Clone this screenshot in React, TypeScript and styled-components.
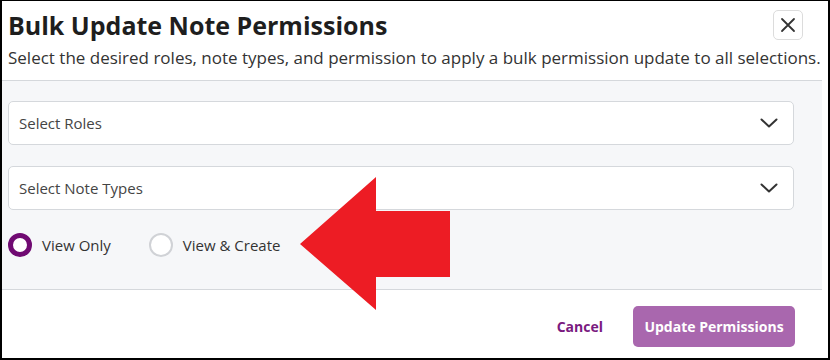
import styled, { createGlobalStyle } from "styled-components";

const GlobalStyle = createGlobalStyle`
  body {
    margin: 0;
    background: #ffffff;
    font-family: "Open Sans", "Noto Sans", sans-serif;
  }
`;

export default function App() {
  return (
    <>
      <GlobalStyle />
      <Frame>
        <Modal>
          {/* header */}
          <Header>
            <TitleRow>
              <Title>Bulk Update Note Permissions</Title>
              <CloseBtn aria-label='Close'>
                <svg width='16' height='16' viewBox='0 0 16 16'>
                  <path
                    d='M2 2 L14 14 M14 2 L2 14'
                    stroke='#333'
                    strokeWidth='1.8'
                    strokeLinecap='round'
                  />
                </svg>
              </CloseBtn>
            </TitleRow>
            <Subtitle>
              Select the desired roles, note types, and permission to apply a
              bulk permission update to all selections.
            </Subtitle>
          </Header>

          {/* body */}
          <Body>
            <Select>
              <Placeholder>Select Roles</Placeholder>
              <Chevron />
            </Select>
            <Select>
              <Placeholder>Select Note Types</Placeholder>
              <Chevron />
            </Select>
            <RadioRow>
              <RadioLabel>
                <Radio checked />
                View Only
              </RadioLabel>
              <RadioLabel>
                <Radio />
                View &amp; Create
              </RadioLabel>
            </RadioRow>
          </Body>

          {/* footer */}
          <Footer>
            <CancelBtn>Cancel</CancelBtn>
            <PrimaryBtn>Update Permissions</PrimaryBtn>
          </Footer>
        </Modal>

        <Arrow width='150' height='133' viewBox='0 0 150 133'>
          <polygon
            points='0,67 76,0 76,34 150,34 150,100 76,100 76,133'
            fill='#ed1c24'
          />
        </Arrow>
      </Frame>
    </>
  );
}

function Chevron() {
  return (
    <svg width='18' height='10' viewBox='0 0 18 10'>
      <path
        d='M1.5 1.5 L9 8.5 L16.5 1.5'
        fill='none'
        stroke='#333'
        strokeWidth='2'
        strokeLinecap='round'
        strokeLinejoin='round'
      />
    </svg>
  );
}

const Frame = styled.div`
  position: relative;
  width: 830px;
  height: 360px;
  box-sizing: border-box;
  border: 2px solid #000;
  border-top-width: 1px;
  background: #fff;
  overflow: hidden;
`;

const Modal = styled.div`
  width: 820px;
  height: 100%;
  display: flex;
  flex-direction: column;
`;

const Header = styled.header`
  flex: 0 0 80px;
  box-sizing: border-box;
  border-bottom: 1px solid #d5d8dc;
  padding: 8px 0 0 6px;
`;

const TitleRow = styled.div`
  display: flex;
  justify-content: space-between;
  align-items: center;
  padding-right: 19px;
`;

const Title = styled.h2`
  margin: 0;
  font-size: 25px;
  font-weight: 700;
  line-height: 32px;
  color: #1e1e1e;
`;

const CloseBtn = styled.button`
  width: 30px;
  height: 30px;
  padding: 0;
  display: flex;
  align-items: center;
  justify-content: center;
  background: #fff;
  border: 1px solid #dcdcdc;
  border-radius: 5px;
`;

const Subtitle = styled.p`
  margin: 5px 0 0;
  font-size: 17px;
  line-height: 24px;
  color: #333;
  white-space: nowrap;
`;

const Body = styled.div`
  flex: 0 0 209px;
  box-sizing: border-box;
  background: #f6f7f9;
  border-bottom: 1px solid #d5d8dc;
  padding: 20px 28px 0 6px;
  display: flex;
  flex-direction: column;
  gap: 21px;
`;

const Select = styled.div`
  height: 44px;
  box-sizing: border-box;
  background: #fff;
  border: 1px solid #d5d8dc;
  border-radius: 5px;
  display: flex;
  align-items: center;
  justify-content: space-between;
  padding: 0 15px 0 10px;
`;

const Placeholder = styled.span`
  font-size: 15px;
  color: #444;
`;

const RadioRow = styled.div`
  display: flex;
  align-items: center;
  gap: 38px;
  margin-top: 2px;
`;

const RadioLabel = styled.label`
  display: flex;
  align-items: center;
  gap: 10px;
  font-size: 15px;
  color: #333;
`;

const Radio = styled.span<{ checked?: boolean }>`
  width: 24px;
  height: 24px;
  box-sizing: border-box;
  border-radius: 50%;
  background: #fff;
  border: ${(props) =>
    props.checked ? "5px solid #700a72" : "2px solid #d0d2d6"};
`;

const Footer = styled.footer`
  flex: 1;
  display: flex;
  justify-content: flex-end;
  align-items: center;
  gap: 30px;
  padding: 4px 27px 0 0;
`;

const CancelBtn = styled.button`
  background: none;
  border: none;
  padding: 0;
  font-family: inherit;
  font-size: 14px;
  font-weight: 700;
  color: #7a1a80;
`;

const PrimaryBtn = styled.button`
  width: 162px;
  height: 41px;
  border: none;
  border-radius: 5px;
  background: #a967ae;
  color: #fff;
  font-family: inherit;
  font-size: 14px;
  font-weight: 700;
`;

const Arrow = styled.svg`
  position: absolute;
  left: 298px;
  top: 176px;
`;
